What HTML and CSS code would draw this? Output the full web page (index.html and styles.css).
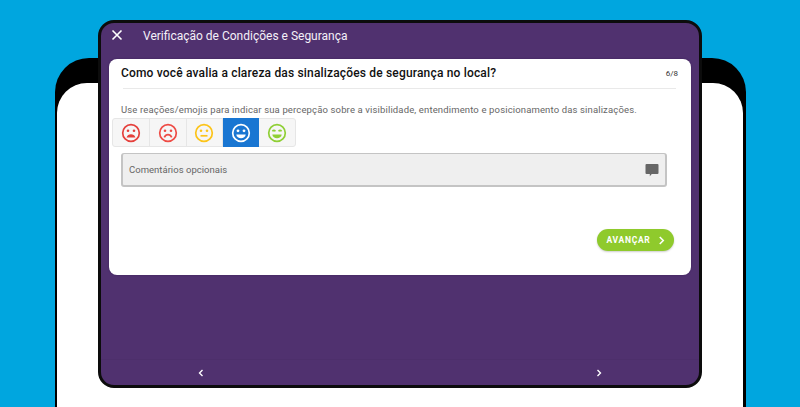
FILE: index.html
```html
<!DOCTYPE html>
<html lang="pt-BR">
<head>
<meta charset="utf-8">
<title>Verificação de Condições e Segurança</title>
<link rel="stylesheet" href="styles.css">
</head>
<body>
<div class="back-device"><div class="back-screen"></div></div>
<main class="tablet">
  <header class="topbar">
    <svg class="close" viewBox="0 0 12 12" width="12" height="12"><path d="M1.500 1.500l9 9M10.500 1.500l-9 9"/></svg>
    <h1 class="title">Verificação de Condições e Segurança</h1>
  </header>
  <section class="card">
    <div class="question">
      <h2 class="question-text">Como você avalia a clareza das sinalizações de segurança no local?</h2>
      <span class="counter">6/8</span>
    </div>
    <p class="hint">Use reações/emojis para indicar sua percepção sobre a visibilidade, entendimento e posicionamento das sinalizações.</p>
    <div class="faces">
      <button class="face face-red"><svg viewBox="0 0 20 20" width="20" height="20"><circle cx="10" cy="10" r="8.300"/><circle class="dot" cx="7" cy="7.800" r="1.300"/><circle class="dot" cx="13" cy="7.800" r="1.300"/><path class="fill" d="M5.600 14.600c.6-2.500 2.400-3.400 4.400-3.400s3.800.9 4.400 3.400z"/></svg></button>
      <button class="face face-red2"><svg viewBox="0 0 20 20" width="20" height="20"><circle cx="10" cy="10" r="8.300"/><circle class="dot" cx="7" cy="7.800" r="1.300"/><circle class="dot" cx="13" cy="7.800" r="1.300"/><path d="M6.300 14.300c1-2 2.300-2.700 3.700-2.700s2.700.7 3.700 2.700"/></svg></button>
      <button class="face face-yellow"><svg viewBox="0 0 20 20" width="20" height="20"><circle cx="10" cy="10" r="8.300"/><circle class="dot" cx="7" cy="7.800" r="1.300"/><circle class="dot" cx="13" cy="7.800" r="1.300"/><path d="M6.500 12.800h7"/></svg></button>
      <button class="face face-active"><svg viewBox="0 0 20 20" width="20" height="20"><circle cx="10" cy="10" r="8.300"/><circle class="dot" cx="7" cy="7.800" r="1.400"/><circle class="dot" cx="13" cy="7.800" r="1.400"/><path class="fill" d="M5.300 11.400h9.400c-.3 2.500-2.300 3.800-4.700 3.800s-4.400-1.300-4.700-3.800z"/></svg></button>
      <button class="face face-green"><svg viewBox="0 0 20 20" width="20" height="20"><circle cx="10" cy="10" r="8.300"/><path d="M5.500 8.300c.7-1.300 2.100-1.300 2.800 0M11.700 8.300c.7-1.300 2.100-1.300 2.800 0"/><path class="fill" d="M5.300 11.400h9.400c-.3 2.500-2.300 3.800-4.700 3.800s-4.400-1.300-4.700-3.800z"/></svg></button>
    </div>
    <div class="comment">
      <span class="comment-label">Comentários opcionais</span>
      <svg class="comment-icon" viewBox="0 0 14 14" width="14" height="14"><path d="M1.500 1h11a1 1 0 0 1 1 1v8a1 1 0 0 1-1 1H6.800l-2 2.300V11H1.500a1 1 0 0 1-1-1V2a1 1 0 0 1 1-1z"/></svg>
    </div>
    <div class="actions">
      <button class="next">AVANÇAR<svg viewBox="0 0 8 10" width="7" height="9"><path d="M2 1l4 4-4 4"/></svg></button>
    </div>
  </section>
  <nav class="pager">
    <svg viewBox="0 0 8 10" width="6" height="8"><path d="M6 1L2 5l4 4"/></svg>
    <svg viewBox="0 0 8 10" width="6" height="8"><path d="M2 1l4 4-4 4"/></svg>
  </nav>
</main>
</body>
</html>
```

FILE: styles.css
```css
* { box-sizing: border-box; }
html, body { margin: 0; height: 100%; }
body {
  position: relative;
  width: 800px;
  height: 407px;
  overflow: hidden;
  background: #00a6df;
  font-family: Roboto, "Liberation Sans", sans-serif;
}
.back-device {
  position: absolute;
  left: 55px;
  top: 58px;
  width: 691px;
  height: 349px;
  display: flex;
  padding: 25px 3px 0 2px;
  background: #000;
  border-radius: 34px 34px 0 0;
}
.back-screen {
  flex: 1;
  background: #fff;
  border-radius: 30px 30px 0 0;
}
.tablet {
  position: absolute;
  left: 98px;
  top: 20px;
  width: 604px;
  height: 368px;
  display: flex;
  flex-direction: column;
  background: #50316f;
  border: 3px solid #0c0c0c;
  border-radius: 16px;
  padding: 0 8px;
}
.topbar {
  display: flex;
  align-items: center;
  height: 24px;
  margin-bottom: 12px;
  flex: none;
}
.close {
  margin-left: 2px;
  fill: none;
  stroke: #fff;
  stroke-width: 1.600;
}
.title {
  margin: 2px 0 0 20px;
  font-size: 12px;
  font-weight: 400;
  color: #f4f0f8;
  white-space: nowrap;
}
.card {
  flex: none;
  height: 216px;
  background: #fff;
  border-radius: 8px;
  padding: 0 13px 0 12px;
  display: flex;
  flex-direction: column;
  box-shadow: 0 0 2px #3a1f5a;
}
.question {
  display: flex;
  align-items: center;
  justify-content: space-between;
  height: 30px;
  border-bottom: 1px solid #e9e9e9;
  margin: 0 2px 0 2px;
}
.question-text {
  margin: 0 0 1px -2px;
  font-size: 12px;
  font-weight: 500;
  color: #111;
  white-space: nowrap;
  letter-spacing: 0.17px;
}
.counter { font-size: 8px; color: #333; margin-right: -2px; }
.hint {
  margin: 15px 0 0;
  font-size: 9.500px;
  line-height: 12px;
  color: #666;
  white-space: nowrap;
  letter-spacing: 0.14px;
}
.faces {
  display: flex;
  width: 184px;
  height: 29px;
  margin: 2px 0 0 -9px;
  background: #f6f6f6;
  border: 1px solid #e6e6e6;
  border-radius: 3px;
}
.face {
  flex: 1;
  padding: 0;
  display: flex;
  align-items: center;
  justify-content: center;
  background: transparent;
  border: 0;
  border-right: 1px solid #e6e6e6;
}
.face:last-child { border-right: 0; }
.face svg { fill: none; stroke: currentColor; stroke-width: 1.700; display: block; }
.face .dot, .face .fill { fill: currentColor; stroke: none; }
.face-red { color: #e53f3b; }
.face-red2 { color: #ee4b45; }
.face-yellow { color: #fcc419; }
.face-active { color: #fff; background: #1976d2; margin: -1px 0; border-right: 0; }
.face-green { color: #8fcf35; }
.comment {
  display: flex;
  align-items: center;
  justify-content: space-between;
  width: 546px;
  height: 34px;
  margin: 6px 0 0;
  padding: 0 6px;
  background: #efefef;
  border: solid #c4c4c4;
  border-width: 1px 2px 2px;
  border-radius: 3px;
}
.comment-label { font-size: 9.500px; color: #666; letter-spacing: 0.02px; }
.comment-icon { fill: #666; }
.actions {
  display: flex;
  justify-content: flex-end;
  margin-top: 42px;
  margin-right: 4px;
}
.next {
  display: flex;
  align-items: center;
  justify-content: center;
  gap: 8px;
  width: 77px;
  height: 22px;
  padding: 0 0 0 1px;
  border: 0;
  border-radius: 11px;
  background: #8fca2c;
  color: #fff;
  font-family: inherit;
  font-size: 8.500px;
  font-weight: 700;
  letter-spacing: 0.7px;
  box-shadow: 0 1px 2px rgba(0,0,0,.2);
}
.next svg, .pager svg { fill: none; stroke: #fff; stroke-width: 1.800; }
.pager {
  flex: none;
  height: 26px;
  margin: auto -8px 0;
  display: flex;
  align-items: center;
  justify-content: space-between;
  padding: 0 97px 0 97px;
  border-top: 1px solid #4d2f6b;
}
```
